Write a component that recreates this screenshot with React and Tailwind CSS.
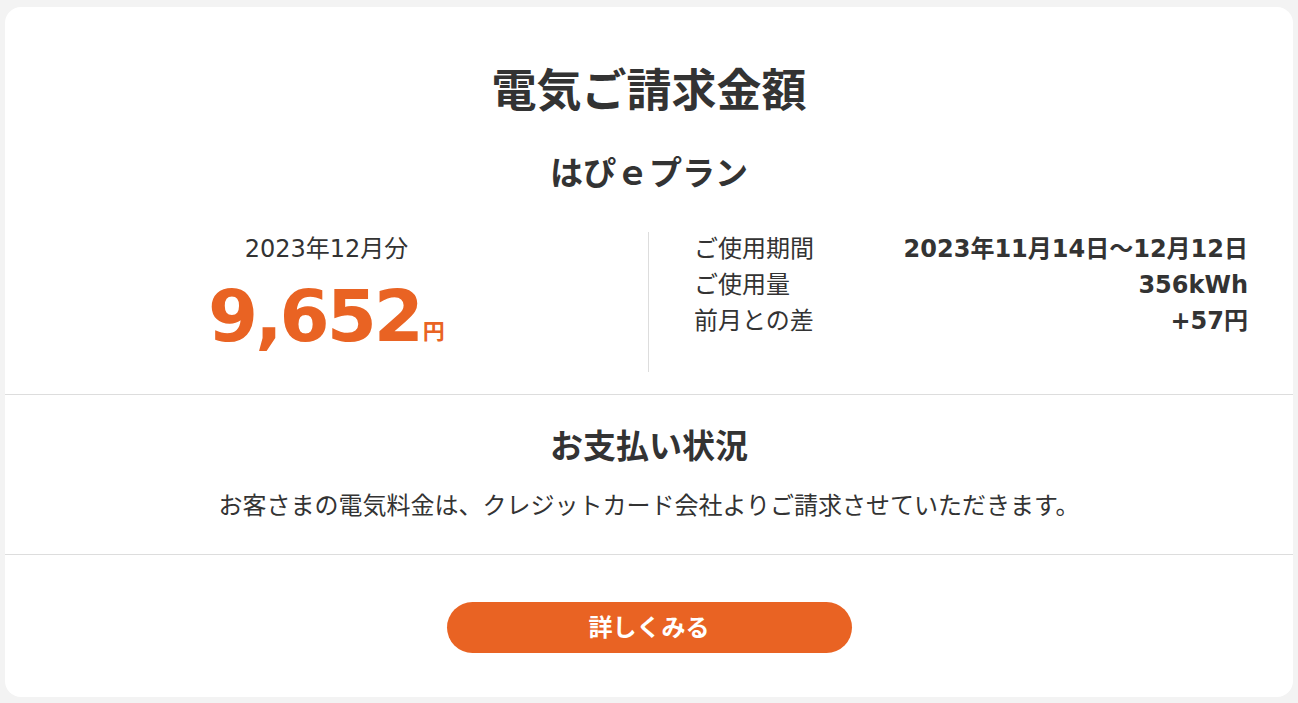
const font = { fontFamily: '"DejaVu Sans", "Noto Sans CJK JP", sans-serif' };

export default function App() {
  return (
    <div className="min-h-[703px] bg-[#f3f3f3] px-[5px] pt-[7px] pb-[6px] text-[#333333]" style={font}>
      <div className="bg-white rounded-2xl h-[690px] flex flex-col">
        <h1 className="text-center font-bold text-[45px] leading-none pt-[62px]">電気ご請求金額</h1>
        <h2 className="text-center font-bold text-[33px] leading-none mt-[43px]">はぴｅプラン</h2>

        <div className="flex mt-[42px] h-[140px]">
          <div className="w-[644px] flex flex-col items-center border-r border-[#dddddd]">
            <div className="text-[24px] leading-none pt-[5px]">2023年12月分</div>
            <div className="flex items-end mt-[19px] text-[#e96323] font-bold">
              <span className="text-[72px] leading-none tracking-[-3px]">9,652</span>
              <span className="text-[22px] leading-none mb-[9px] ml-[2px]">円</span>
            </div>
          </div>
          <div className="flex-1 pl-[45px] pr-[45px] text-[24px] leading-none">
            <div className="flex justify-between pt-[5px]">
              <span>ご使用期間</span>
              <span className="font-bold">2023年11月14日～12月12日</span>
            </div>
            <div className="flex justify-between mt-[12px]">
              <span>ご使用量</span>
              <span className="font-bold">356kWh</span>
            </div>
            <div className="flex justify-between mt-[12px]">
              <span>前月との差</span>
              <span className="font-bold">+57円</span>
            </div>
          </div>
        </div>

        <div className="mt-[22px] border-t border-[#dddddd]" />

        <h2 className="text-center font-bold text-[33px] leading-none mt-[35px]">お支払い状況</h2>
        <p className="text-center text-[24px] leading-none mt-[31px]">
          お客さまの電気料金は、クレジットカード会社よりご請求させていただきます。
        </p>

        <div className="mt-[36px] border-t border-[#dddddd]" />

        <div className="flex justify-center mt-[47px]">
          <button className="w-[405px] h-[51px] rounded-full bg-[#e96323] text-white font-bold text-[24px]">
            詳しくみる
          </button>
        </div>
      </div>
    </div>
  );
}
